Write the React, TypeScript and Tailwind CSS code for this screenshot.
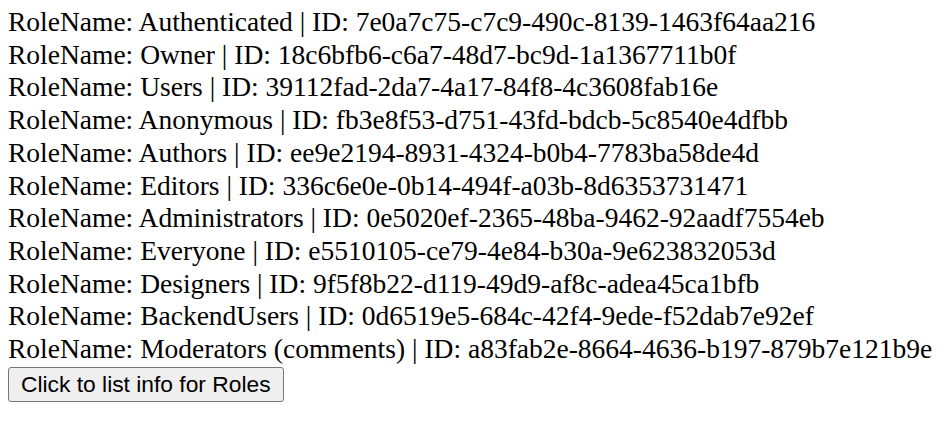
const roles = [
  { name: "Authenticated", id: "7e0a7c75-c7c9-490c-8139-1463f64aa216" },
  { name: "Owner", id: "18c6bfb6-c6a7-48d7-bc9d-1a1367711b0f" },
  { name: "Users", id: "39112fad-2da7-4a17-84f8-4c3608fab16e" },
  { name: "Anonymous", id: "fb3e8f53-d751-43fd-bdcb-5c8540e4dfbb" },
  { name: "Authors", id: "ee9e2194-8931-4324-b0b4-7783ba58de4d" },
  { name: "Editors", id: "336c6e0e-0b14-494f-a03b-8d6353731471" },
  { name: "Administrators", id: "0e5020ef-2365-48ba-9462-92aadf7554eb" },
  { name: "Everyone", id: "e5510105-ce79-4e84-b30a-9e623832053d" },
  { name: "Designers", id: "9f5f8b22-d119-49d9-af8c-adea45ca1bfb" },
  { name: "BackendUsers", id: "0d6519e5-684c-42f4-9ede-f52dab7e92ef" },
  { name: "Moderators (comments)", id: "a83fab2e-8664-4636-b197-879b7e121b9e" },
];

export default function App() {
  return (
    <div className="min-h-[436px] bg-white px-2 pt-[6px] text-black">
      {roles.map((r) => (
        <div key={r.id} className="whitespace-nowrap font-['Liberation_Serif'] text-[27.5px] leading-[32.7px]">
          RoleName: {r.name} | ID: {r.id}
        </div>
      ))}

      <button className="mt-px block h-[35px] rounded-[3px] border border-[#767676] bg-[#efefef] px-3 font-['Liberation_Sans'] text-[22.8px] leading-none text-black">
        Click to list info for Roles
      </button>
    </div>
  );
}
